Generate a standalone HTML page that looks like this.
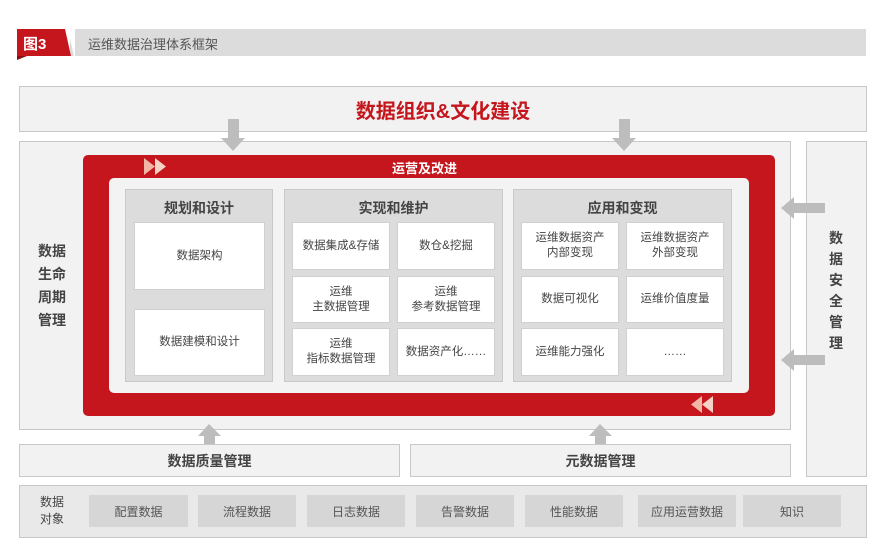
<!DOCTYPE html><html><head><meta charset="utf-8"><style>
*{margin:0;padding:0;box-sizing:border-box}
body{width:879px;height:547px;background:#fff;position:relative;overflow:hidden;font-family:"Liberation Sans","Noto Sans CJK SC",sans-serif;color:#444}
.a{position:absolute}
.c{display:flex;align-items:center;justify-content:center;text-align:center}
.box{background:#f2f2f2;border:1px solid #c8c8c8}
.col{background:#dcdcdd;border:1px solid #c9c9c9}
.cell{background:#fff;font-size:11.5px;color:#444;line-height:15px;border:1px solid #d0d0d0}
.h{font-size:14px;font-weight:bold;color:#444}
.item{background:#d6d6d7;font-size:12px;color:#555}
</style></head><body>
<div class="a" style="left:70px;top:29px;width:796px;height:27px;background:#dcdcdd"></div>
<svg class="a" style="left:15px;top:27px" width="60" height="34"><polygon points="2,2 50,2 56,29 2,29" fill="#c4161c"/><polygon points="2,29 12,29 2,33" fill="#8a0f13"/><polygon points="53,2 60,2 66,29 59,29" fill="#fff"/></svg>
<div class="a" style="left:23px;top:33px;font-size:15px;font-weight:bold;color:#fff">图3</div>
<div class="a" style="left:88px;top:34px;font-size:13px;color:#555">运维数据治理体系框架</div>

<div class="a box c" style="left:19px;top:86px;width:848px;height:46px;font-size:20px;font-weight:bold;color:#c4161c">数据组织&amp;文化建设</div>
<div class="a box" style="left:19px;top:141px;width:772px;height:289px"></div>
<div class="a box" style="left:806px;top:141px;width:61px;height:336px"></div>
<div class="a" style="left:829px;top:228px;font-size:14px;font-weight:bold;line-height:21px;width:16px;color:#444">数据安全管理</div>
<div class="a" style="left:38px;top:240px;font-size:14px;font-weight:bold;line-height:23px;color:#444">数据<br>生命<br>周期<br>管理</div>

<svg class="a" style="left:0;top:0" width="879" height="547">
<g fill="#bdbdbe">
<rect x="228" y="119" width="11" height="20"/><polygon points="221,138 245,138 233,151"/>
<rect x="619" y="119" width="11" height="20"/><polygon points="612,138 636,138 624,151"/>
<rect x="793" y="203" width="32" height="10"/><polygon points="794,197 794,219 781,208"/>
<rect x="793" y="355" width="32" height="10"/><polygon points="794,349 794,371 781,360"/>
<rect x="204" y="435" width="11" height="12"/><polygon points="198,436 221,436 209,424"/>
<rect x="595" y="435" width="11" height="12"/><polygon points="589,436 612,436 600,424"/>
</g></svg>

<div class="a" style="left:83px;top:155px;width:692px;height:261px;background:#c4161c;border-radius:5px"></div>
<div class="a" style="left:392px;top:158px;font-size:13px;font-weight:bold;color:#fff">运营及改进</div>
<svg class="a" style="left:143px;top:157px" width="30" height="19"><polygon points="1,1 12,9.5 1,18" fill="#f1b6a6"/><polygon points="12,1 23,9.5 12,18" fill="#f6d1c5"/></svg>
<svg class="a" style="left:686px;top:395px" width="30" height="19"><polygon points="16,1 5,9.5 16,18" fill="#f1b6a6"/><polygon points="27,1 16,9.5 27,18" fill="#f6d1c5"/></svg>
<div class="a" style="left:109px;top:178px;width:640px;height:215px;background:#f3f3f3;border-radius:5px"></div>

<div class="a col" style="left:125px;top:189px;width:148px;height:193px"></div>
<div class="a h" style="left:125px;top:198px;width:148px;text-align:center">规划和设计</div>
<div class="a cell c" style="left:134px;top:222px;width:131px;height:68px">数据架构</div>
<div class="a cell c" style="left:134px;top:309px;width:131px;height:67px">数据建模和设计</div>

<div class="a col" style="left:284px;top:189px;width:219px;height:193px"></div>
<div class="a h" style="left:284px;top:198px;width:219px;text-align:center">实现和维护</div>
<div class="a cell c" style="left:292px;top:222px;width:98px;height:48px">数据集成&amp;存储</div>
<div class="a cell c" style="left:397px;top:222px;width:98px;height:48px">数仓&amp;挖掘</div>
<div class="a cell c" style="left:292px;top:276px;width:98px;height:47px">运维<br>主数据管理</div>
<div class="a cell c" style="left:397px;top:276px;width:98px;height:47px">运维<br>参考数据管理</div>
<div class="a cell c" style="left:292px;top:328px;width:98px;height:48px">运维<br>指标数据管理</div>
<div class="a cell c" style="left:397px;top:328px;width:98px;height:48px">数据资产化……</div>

<div class="a col" style="left:513px;top:189px;width:219px;height:193px"></div>
<div class="a h" style="left:513px;top:198px;width:219px;text-align:center">应用和变现</div>
<div class="a cell c" style="left:521px;top:222px;width:98px;height:48px">运维数据资产<br>内部变现</div>
<div class="a cell c" style="left:626px;top:222px;width:98px;height:48px">运维数据资产<br>外部变现</div>
<div class="a cell c" style="left:521px;top:276px;width:98px;height:47px">数据可视化</div>
<div class="a cell c" style="left:626px;top:276px;width:98px;height:47px">运维价值度量</div>
<div class="a cell c" style="left:521px;top:328px;width:98px;height:48px">运维能力强化</div>
<div class="a cell c" style="left:626px;top:328px;width:98px;height:48px">……</div>

<div class="a box c" style="left:19px;top:444px;width:381px;height:33px;font-size:14px;font-weight:bold">数据质量管理</div>
<div class="a box c" style="left:410px;top:444px;width:381px;height:33px;font-size:14px;font-weight:bold">元数据管理</div>

<div class="a" style="left:19px;top:485px;width:848px;height:53px;background:#e9e9ea;border:1px solid #c8c8c8"></div>
<div class="a" style="left:40px;top:494px;font-size:12px;line-height:17px;color:#444">数据<br>对象</div>
<div class="a item c" style="left:89px;top:495px;width:99px;height:32px">配置数据</div>
<div class="a item c" style="left:198px;top:495px;width:98px;height:32px">流程数据</div>
<div class="a item c" style="left:307px;top:495px;width:98px;height:32px">日志数据</div>
<div class="a item c" style="left:416px;top:495px;width:98px;height:32px">告警数据</div>
<div class="a item c" style="left:525px;top:495px;width:98px;height:32px">性能数据</div>
<div class="a item c" style="left:638px;top:495px;width:98px;height:32px">应用运营数据</div>
<div class="a item c" style="left:743px;top:495px;width:98px;height:32px">知识</div>
</body></html>
